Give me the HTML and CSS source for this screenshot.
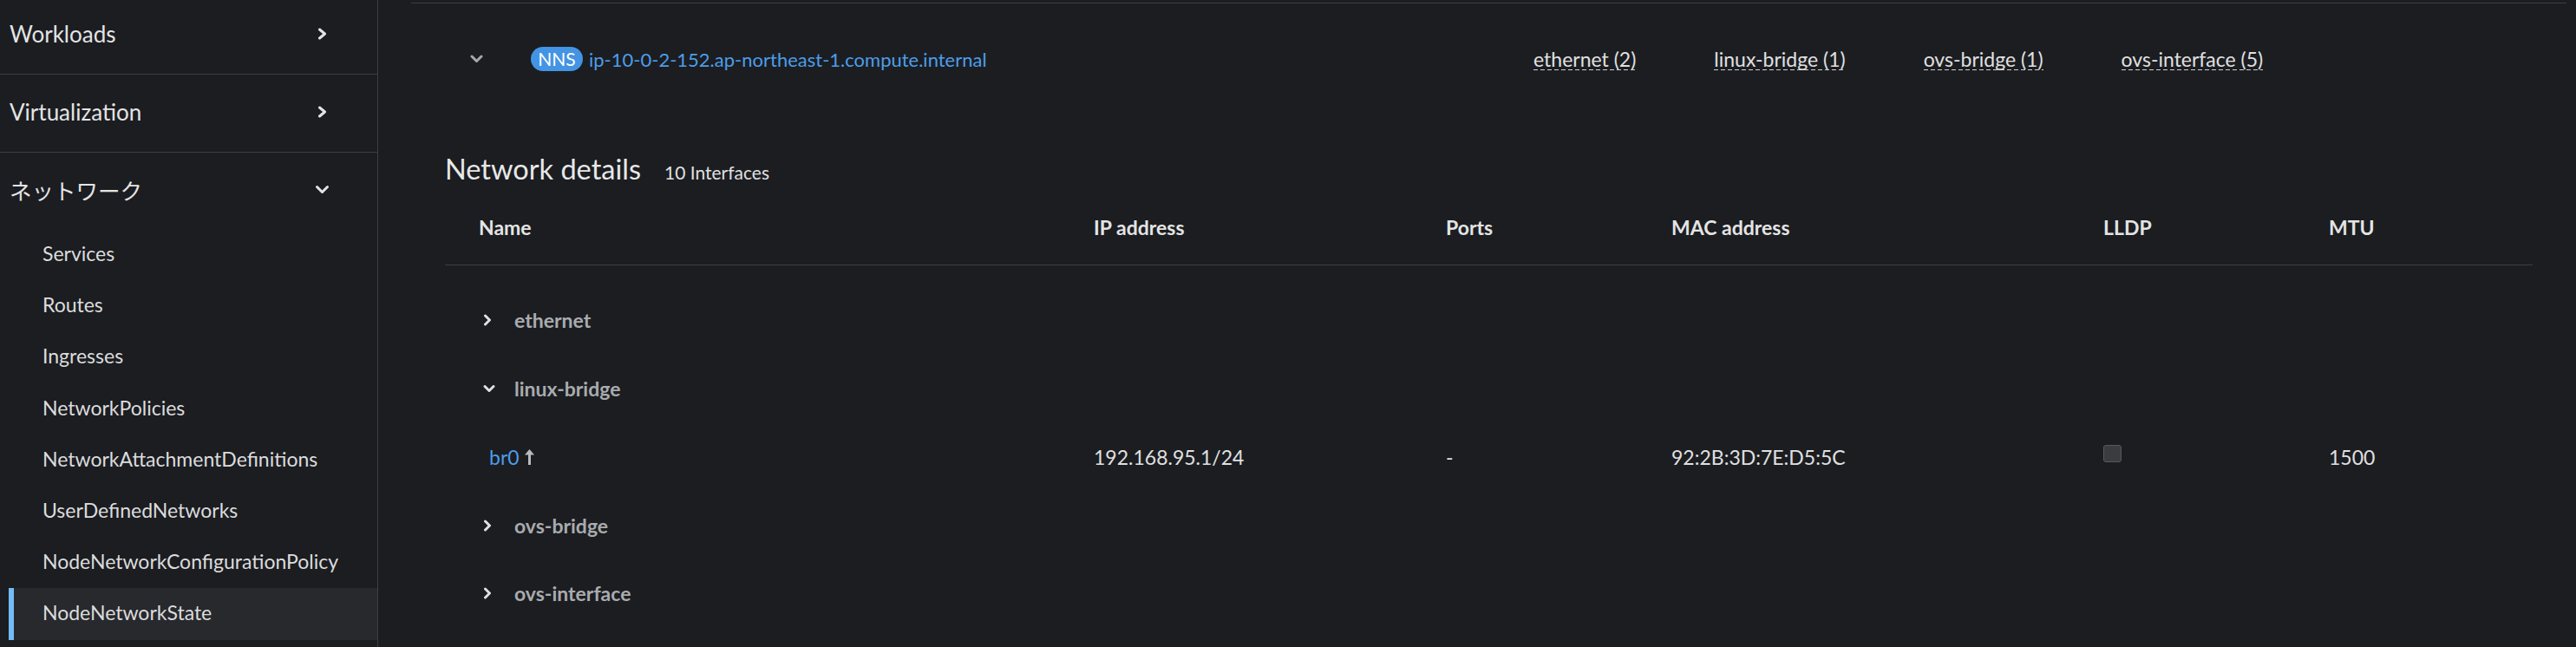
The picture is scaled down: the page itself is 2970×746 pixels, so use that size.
FILE: index.html
```html
<!DOCTYPE html>
<html lang="ja">
<head>
<meta charset="utf-8">
<title>NodeNetworkState</title>
<link rel="stylesheet" href="styles.css">
</head>
<body>
<div class="app">
  <nav class="sidebar">
    <ul class="nav">
      <li class="nav-item">
        <span>Workloads</span>
        <span class="nav-icon"><svg class="chev-right" viewBox="0 0 11 14"><polyline points="2.5,2 8.5,7 2.5,12"/></svg></span>
      </li>
      <li class="nav-item">
        <span>Virtualization</span>
        <span class="nav-icon"><svg class="chev-right" viewBox="0 0 11 14"><polyline points="2.5,2 8.5,7 2.5,12"/></svg></span>
      </li>
      <li class="nav-item nav-item--open">
        <span class="ja">ネットワーク</span>
        <span class="nav-icon"><svg class="chev-down" viewBox="0 0 17 11"><polyline points="2.5,2.5 8.5,8.5 14.5,2.5"/></svg></span>
      </li>
      <li>
        <ul class="subnav">
          <li class="subnav-link">Services</li>
          <li class="subnav-link">Routes</li>
          <li class="subnav-link">Ingresses</li>
          <li class="subnav-link">NetworkPolicies</li>
          <li class="subnav-link">NetworkAttachmentDefinitions</li>
          <li class="subnav-link">UserDefinedNetworks</li>
          <li class="subnav-link">NodeNetworkConfigurationPolicy</li>
          <li class="subnav-link subnav-link--current">NodeNetworkState</li>
        </ul>
      </li>
    </ul>
  </nav>

  <main class="main">
    <div class="node-list">
      <div class="node-row">
        <div class="node-toggle">
          <svg class="chev-node" viewBox="0 0 15 10"><polyline points="2,2 7.5,7.5 13,2"/></svg>
        </div>
        <div class="node-name">
          <span class="badge">NNS</span>
          <span class="node-link">ip-10-0-2-152.ap-northeast-1.compute.internal</span>
        </div>
        <div class="tags">
          <span class="tag">ethernet (2)</span>
          <span class="tag">linux-bridge (1)</span>
          <span class="tag">ovs-bridge (1)</span>
          <span class="tag">ovs-interface (5)</span>
        </div>
      </div>
    </div>

    <section class="details">
      <div class="details-title">
        <h2 class="title">Network details</h2>
        <span class="count">10 Interfaces</span>
      </div>

      <div class="table-head">
        <div class="cell">Name</div>
        <div class="cell">IP address</div>
        <div class="cell">Ports</div>
        <div class="cell">MAC address</div>
        <div class="cell">LLDP</div>
        <div class="cell">MTU</div>
      </div>

      <div class="table-body">
        <div class="group-row">
          <span class="group-toggle"><svg class="chev-small-right" viewBox="0 0 10 14"><polyline points="2.5,2 7.5,7 2.5,12"/></svg></span>
          <span class="group-name">ethernet</span>
        </div>
        <div class="group-row">
          <span class="group-toggle"><svg class="chev-small-down" viewBox="0 0 14 10"><polyline points="2,2.5 7,7.5 12,2.5"/></svg></span>
          <span class="group-name">linux-bridge</span>
        </div>
        <div class="data-row">
          <div class="cell cell--name">
            <span class="iface-link">br0</span>
            <svg class="arrow-up" viewBox="0 0 11 18"><path d="M5.5 0 L11 6.5 H7 V18 H4 V6.5 H0 Z"/></svg>
          </div>
          <div class="cell">192.168.95.1/24</div>
          <div class="cell">-</div>
          <div class="cell">92:2B:3D:7E:D5:5C</div>
          <div class="cell"><span class="checkbox"></span></div>
          <div class="cell">1500</div>
        </div>
        <div class="group-row">
          <span class="group-toggle"><svg class="chev-small-right" viewBox="0 0 10 14"><polyline points="2.5,2 7.5,7 2.5,12"/></svg></span>
          <span class="group-name">ovs-bridge</span>
        </div>
        <div class="group-row">
          <span class="group-toggle"><svg class="chev-small-right" viewBox="0 0 10 14"><polyline points="2.5,2 7.5,7 2.5,12"/></svg></span>
          <span class="group-name">ovs-interface</span>
        </div>
      </div>
    </section>
  </main>
</div>
</body>
</html>
```

FILE: styles.css
```css
* { box-sizing: border-box; }

html, body {
  margin: 0;
  padding: 0;
}

body {
  width: 2970px;
  height: 746px;
  overflow: hidden;
  background: #1b1d21;
  color: #e0e0e0;
  font-family: Lato, "Noto Sans", "Noto Sans CJK JP", sans-serif;
}

.app {
  display: flex;
  height: 746px;
}

/* ---------- sidebar ---------- */
.sidebar {
  width: 436px;
  flex: none;
  border-right: 1px solid #3c3f42;
  overflow: hidden;
}

.nav {
  list-style: none;
  margin: -4px 0 0;
  padding: 0;
}

.nav-item {
  height: 90px;
  border-bottom: 1px solid #3c3f42;
  display: flex;
  align-items: center;
  justify-content: space-between;
  padding: 0 55px 4px 11px;
  font-size: 26px;
  color: #e4e4e4;
}

.nav-item--open {
  height: 88px;
  border-bottom: none;
  padding-bottom: 3px;
}

.ja {
  font-family: "Noto Sans CJK JP", sans-serif;
  font-size: 25.5px;
}

.nav-icon {
  width: 18px;
  display: flex;
  justify-content: center;
  align-items: center;
}

.nav-icon svg,
.node-toggle svg,
.group-toggle svg {
  fill: none;
  stroke: currentColor;
  stroke-width: 3;
  stroke-linecap: round;
  stroke-linejoin: round;
}

.chev-right { width: 11px; height: 14px; }
.chev-down { width: 17px; height: 11px; }

.subnav {
  list-style: none;
  margin: 0 0 0 10px;
  padding: 0;
}

.subnav-link {
  height: 59.2px;
  display: flex;
  align-items: center;
  padding: 0 0 3px 39px;
  font-size: 23px;
  color: #dcdcdc;
}

.subnav-link--current {
  background: #27292d;
  box-shadow: inset 6px 0 0 #73bcf7;
}

/* ---------- main ---------- */
.main {
  flex: 1;
  min-width: 0;
  padding: 3px 11px 0 38px;
}

.node-list {
  border-top: 1px solid #3c3f42;
}

.node-row {
  height: 128px;
  display: flex;
  align-items: center;
}

.node-toggle {
  width: 138px;
  flex: none;
  padding-left: 68px;
  display: flex;
  align-items: center;
  color: #a8a8a8;
}

.chev-node { width: 15px; height: 10px; }

.node-name {
  width: 1156px;
  flex: none;
  display: flex;
  align-items: center;
  gap: 7px;
}

.badge {
  min-width: 60px;
  height: 28px;
  padding: 0 7px;
  border-radius: 14px;
  background: #4394e5;
  color: #ffffff;
  font-size: 21px;
  line-height: 28px;
  text-align: center;
}

.node-link {
  color: #4d9de8;
  font-size: 22px;
}

.tags {
  display: flex;
  gap: 90px;
}

.tag {
  font-size: 23px;
  line-height: 24px;
  padding-bottom: 1px;
  color: #e0e0e0;
  background-image: repeating-linear-gradient(to right, #d2d2d2 0 5px, transparent 5px 8px);
  background-size: 100% 1px;
  background-position: left bottom;
  background-repeat: no-repeat;
}

/* ---------- details ---------- */
.details {
  margin: 43px 39px 0;
}

.details-title {
  display: flex;
  align-items: baseline;
  gap: 27px;
  height: 40px;
}

.title {
  margin: 0;
  font-size: 32.5px;
  font-weight: 400;
  line-height: 40px;
  color: #e8e8e8;
}

.count {
  font-size: 21px;
  color: #e0e0e0;
}

.table-head,
.data-row {
  display: grid;
  grid-template-columns: 709px 406px 260px 498px 260px 1fr;
  align-items: center;
}

.table-head {
  margin-top: 4px;
  height: 87px;
  border-bottom: 1px solid #3c3f42;
  font-size: 23px;
  font-weight: 700;
  color: #e4e4e4;
}

.cell {
  padding-left: 39px;
  display: flex;
  align-items: center;
}

.table-body {
  padding-top: 24px;
}

.group-row {
  height: 78.75px;
  display: flex;
  align-items: center;
  padding-left: 44px;
}

.group-toggle {
  width: 36px;
  display: flex;
  align-items: center;
  color: #e0e0e0;
}

.chev-small-right { width: 10px; height: 14px; }
.chev-small-down { width: 14px; height: 10px; }

.group-name {
  font-size: 23px;
  font-weight: 700;
  color: #a9abae;
}

.data-row {
  height: 78.75px;
  font-size: 23px;
  color: #e0e0e0;
}

.cell--name {
  padding-left: 51px;
  gap: 6px;
}

.iface-link {
  color: #4d9de8;
}

.arrow-up {
  width: 11px;
  height: 18px;
  fill: #b8bbbe;
}

.checkbox {
  width: 21px;
  height: 20px;
  margin-bottom: 7px;
  border: 1px solid #55585c;
  border-radius: 3px;
  background: #3a3c40;
}
```
